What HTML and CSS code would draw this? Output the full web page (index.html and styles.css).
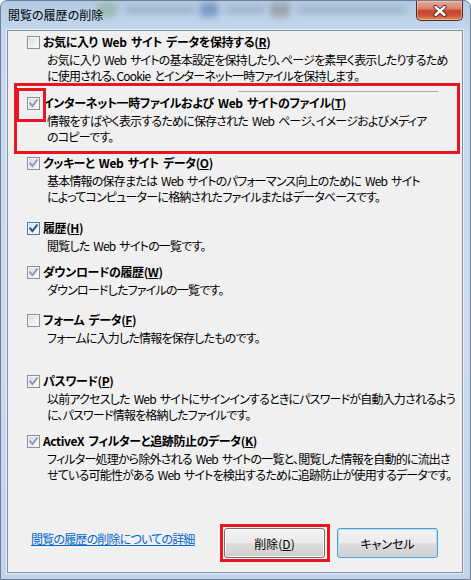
FILE: index.html
```html
<!DOCTYPE html>
<html lang="ja">
<head>
  <meta charset="UTF-8">
  <title>閲覧の履歴の削除</title>
  <link rel="stylesheet" href="styles.css">
</head>
<body>
  <svg class="defs" width="0" height="0">
    <symbol id="check" viewBox="0 0 11 11">
      <path d="M2.2 5.4 L4.4 8.2 L8.9 2.3" fill="none" stroke="currentColor" stroke-width="1.9" stroke-linecap="square"/>
    </symbol>
  </svg>

  <div class="window">
    <div class="titlebar">
      <!-- ぼかしたデスクトップ -->
      <span class="blur b1"></span>
      <span class="blur b2"></span>
      <span class="blur b3"></span>
      <span class="blur b4"></span>
      <span class="blur b5"></span>
      <span class="blur b6"></span>
      <span class="title">閲覧の履歴の削除</span>
      <span class="close">
        <svg width="14" height="12" viewBox="0 0 14 12">
          <path d="M2.5 2 L11.5 10 M11.5 2 L2.5 10" stroke="#4a2620" stroke-width="4.2" stroke-linecap="round"/>
          <path d="M2.5 2 L11.5 10 M11.5 2 L2.5 10" stroke="#fff" stroke-width="2.4" stroke-linecap="round"/>
        </svg>
      </span>
    </div>

    <div class="client">
      <div class="item first">
        <div class="row">
          <span class="box"></span>
          <span class="label">お気に入り Web サイト データを保持する(<u>R</u>)</span>
        </div>
        <div class="desc">お気に入り Web サイトの基本設定を保持したり、ページを素早く表示したりするため<br>に使用される、Cookie とインターネット一時ファイルを保持します。</div>
      </div>

      <hr class="rule">

      <div class="item">
        <div class="row">
          <span class="box on"><svg><use href="#check"/></svg></span>
          <span class="label">インターネット一時ファイルおよび Web サイトのファイル(<u>T</u>)</span>
        </div>
        <div class="desc">情報をすばやく表示するために保存された Web ページ、イメージおよびメディア<br>のコピーです。</div>
      </div>

      <div class="item">
        <div class="row">
          <span class="box on"><svg><use href="#check"/></svg></span>
          <span class="label">クッキーと Web サイト データ(<u>O</u>)</span>
        </div>
        <div class="desc">基本情報の保存または Web サイトのパフォーマンス向上のために Web サイト<br>によってコンピューターに格納されたファイルまたはデータベースです。</div>
      </div>

      <div class="item gap-l">
        <div class="row">
          <span class="box on hot"><svg><use href="#check"/></svg></span>
          <span class="label">履歴(<u>H</u>)</span>
        </div>
        <div class="desc">閲覧した Web サイトの一覧です。</div>
      </div>

      <div class="item">
        <div class="row">
          <span class="box on"><svg><use href="#check"/></svg></span>
          <span class="label">ダウンロードの履歴(<u>W</u>)</span>
        </div>
        <div class="desc">ダウンロードしたファイルの一覧です。</div>
      </div>

      <div class="item gap-m">
        <div class="row">
          <span class="box"></span>
          <span class="label">フォーム データ(<u>F</u>)</span>
        </div>
        <div class="desc">フォームに入力した情報を保存したものです。</div>
      </div>

      <div class="item gap-xl">
        <div class="row">
          <span class="box on"><svg><use href="#check"/></svg></span>
          <span class="label">パスワード(<u>P</u>)</span>
        </div>
        <div class="desc">以前アクセスした Web サイトにサインインするときにパスワードが自動入力されるよう<br>に、パスワード情報を格納したファイルです。</div>
      </div>

      <div class="item">
        <div class="row">
          <span class="box on"><svg><use href="#check"/></svg></span>
          <span class="label">ActiveX フィルターと追跡防止のデータ(<u>K</u>)</span>
        </div>
        <div class="desc">フィルター処理から除外される Web サイトの一覧と、閲覧した情報を自動的に流出さ<br>せている可能性がある Web サイトを検出するために追跡防止が使用するデータです。</div>
      </div>

      <div class="footer">
        <a class="more" href="#">閲覧の履歴の削除についての詳細</a>
        <span class="marked"><button class="btn">削除(<u>D</u>)</button></span>
        <button class="btn default">キャンセル</button>
      </div>

      <!-- 赤枠の注釈 -->
      <div class="mark big"></div>
      <div class="mark small"></div>
    </div>
  </div>
</body>
</html>
```

FILE: styles.css
```css
* {
  box-sizing: border-box;
}
body {
  margin: 0;
  width: 471px;
  height: 580px;
  overflow: hidden;
  font-family: "Noto Sans CJK JP", sans-serif;
  font-feature-settings: "palt";
  font-size: 12px;
  color: #000;
  background: #fff;
}
.defs {
  position: absolute;
}
.window {
  width: 471px;
  height: 580px;
  display: flex;
  flex-direction: column;
  padding: 0 7px 6px 6px;
  border: 1px solid #6f7f91;
  border-radius: 7px 7px 0 0;
  background: linear-gradient(180deg, #b3cbe5 0%, #c6d9ee 6%, #cbdcef 60%, #bfd3ea 100%);
}
.titlebar {
  position: relative;
  height: 29px;
  display: flex;
  align-items: flex-start;
  justify-content: space-between;
  flex-shrink: 0;
}
.blur {
  position: absolute;
  top: 2px;
  height: 14px;
  border-radius: 3px;
  filter: blur(3px);
  opacity: 0.45;
}
.b1 { left: 90px; width: 20px; background: #7fa07a; }
.b2 { left: 118px; width: 70px; height: 8px; top: 5px; background: #8796a8; }
.b3 { left: 193px; width: 18px; background: #2f5d9a; }
.b4 { left: 218px; width: 40px; height: 8px; top: 5px; background: #8796a8; }
.b5 { left: 263px; width: 20px; background: #7c6f66; }
.b6 { left: 290px; width: 110px; height: 8px; top: 5px; background: #8796a8; }
.title {
  position: relative;
  margin-left: 1px;
  padding-top: 6px;
  line-height: 16px;
}
.close {
  position: relative;
  width: 47px;
  height: 20px;
  display: flex;
  align-items: center;
  justify-content: center;
  border: 1px solid #5c2b22;
  border-top: none;
  border-radius: 0 0 5px 5px;
  background: linear-gradient(180deg, #e9a99a 0%, #dc8270 40%, #c7442c 52%, #cf5637 78%, #e19464 100%);
  box-shadow: inset 0 0 0 1px rgba(255, 220, 210, 0.45);
}

.client {
  position: relative;
  flex: 1;
  display: flex;
  flex-direction: column;
  background: #f0f0f0;
  border: 1px solid #828f9e;
  box-shadow: 0 0 0 1px rgba(255, 255, 255, 0.6);
}
.item {
  margin-top: 10px;
}
.item.first {
  margin-top: 3px;
}
.item.gap-l {
  margin-top: 15px;
}
.item.gap-m {
  margin-top: 14px;
}
.item.gap-xl {
  margin-top: 27px;
}
.rule {
  margin: 7px 24px 3px 230px;
  height: 1px;
  border: none;
  background: #a9a9a9;
}
.rule + .item {
  margin-top: 0;
}
.row {
  display: flex;
  align-items: center;
  height: 16px;
  padding-left: 19px;
}
.box {
  width: 13px;
  height: 13px;
  margin-right: 3px;
  border: 1px solid #8e8f8f;
  background: linear-gradient(135deg, #d8d8d8 0%, #eeeeee 55%, #fbfbfb 100%);
  box-shadow: inset 0 0 0 1px #f4f4f4;
  color: #8c97bb;
  display: flex;
}
.box svg {
  width: 11px;
  height: 11px;
}
.box.hot {
  border-color: #3c7fb1;
  color: #2c4a8c;
  background: linear-gradient(135deg, #c9e3f5 0%, #e6f2fb 55%, #fafdff 100%);
}
.label {
  font-weight: bold;
  line-height: 16px;
  letter-spacing: -0.4px;
  word-spacing: 2px;
  white-space: nowrap;
}
.desc {
  margin-top: 2px;
  padding-left: 39px;
  line-height: 16px;
  letter-spacing: -0.8px;
  word-spacing: 2px;
  white-space: nowrap;
}

.footer {
  margin-top: auto;
  display: flex;
  align-items: center;
  padding: 0 24px 10px 23px;
}
.more {
  margin-right: auto;
  margin-top: -8px;
  color: #0066cc;
  line-height: 16px;
  letter-spacing: -0.8px;
}
.btn {
  width: 101px;
  height: 30px;
  margin-left: 11px;
  padding: 0;
  font: inherit;
  color: #000;
  border: 1px solid #707070;
  border-radius: 3px;
  background: linear-gradient(180deg, #f2f2f2 0%, #ebebeb 48%, #dddddd 52%, #cfcfcf 100%);
  box-shadow: inset 0 0 0 1px rgba(255, 255, 255, 0.75);
}
.btn.default {
  border-color: #4b9cd3;
  box-shadow: inset 0 0 0 1px #b8e2f8;
}
.marked {
  display: flex;
  padding: 1px 2px 1px 1px;
  margin: 0 -4px 0 7px;
  border: 3px solid #e8161e;
}
.marked .btn {
  margin-left: 0;
}
.marked + .btn {
  margin-left: 11px;
}
.mark {
  position: absolute;
  border: 3px solid #e8161e;
  pointer-events: none;
}
.mark.big {
  left: 6px;
  top: 52px;
  width: 446px;
  height: 71px;
}
.mark.small {
  left: 8px;
  top: 57px;
  width: 30px;
  height: 34px;
}
```
